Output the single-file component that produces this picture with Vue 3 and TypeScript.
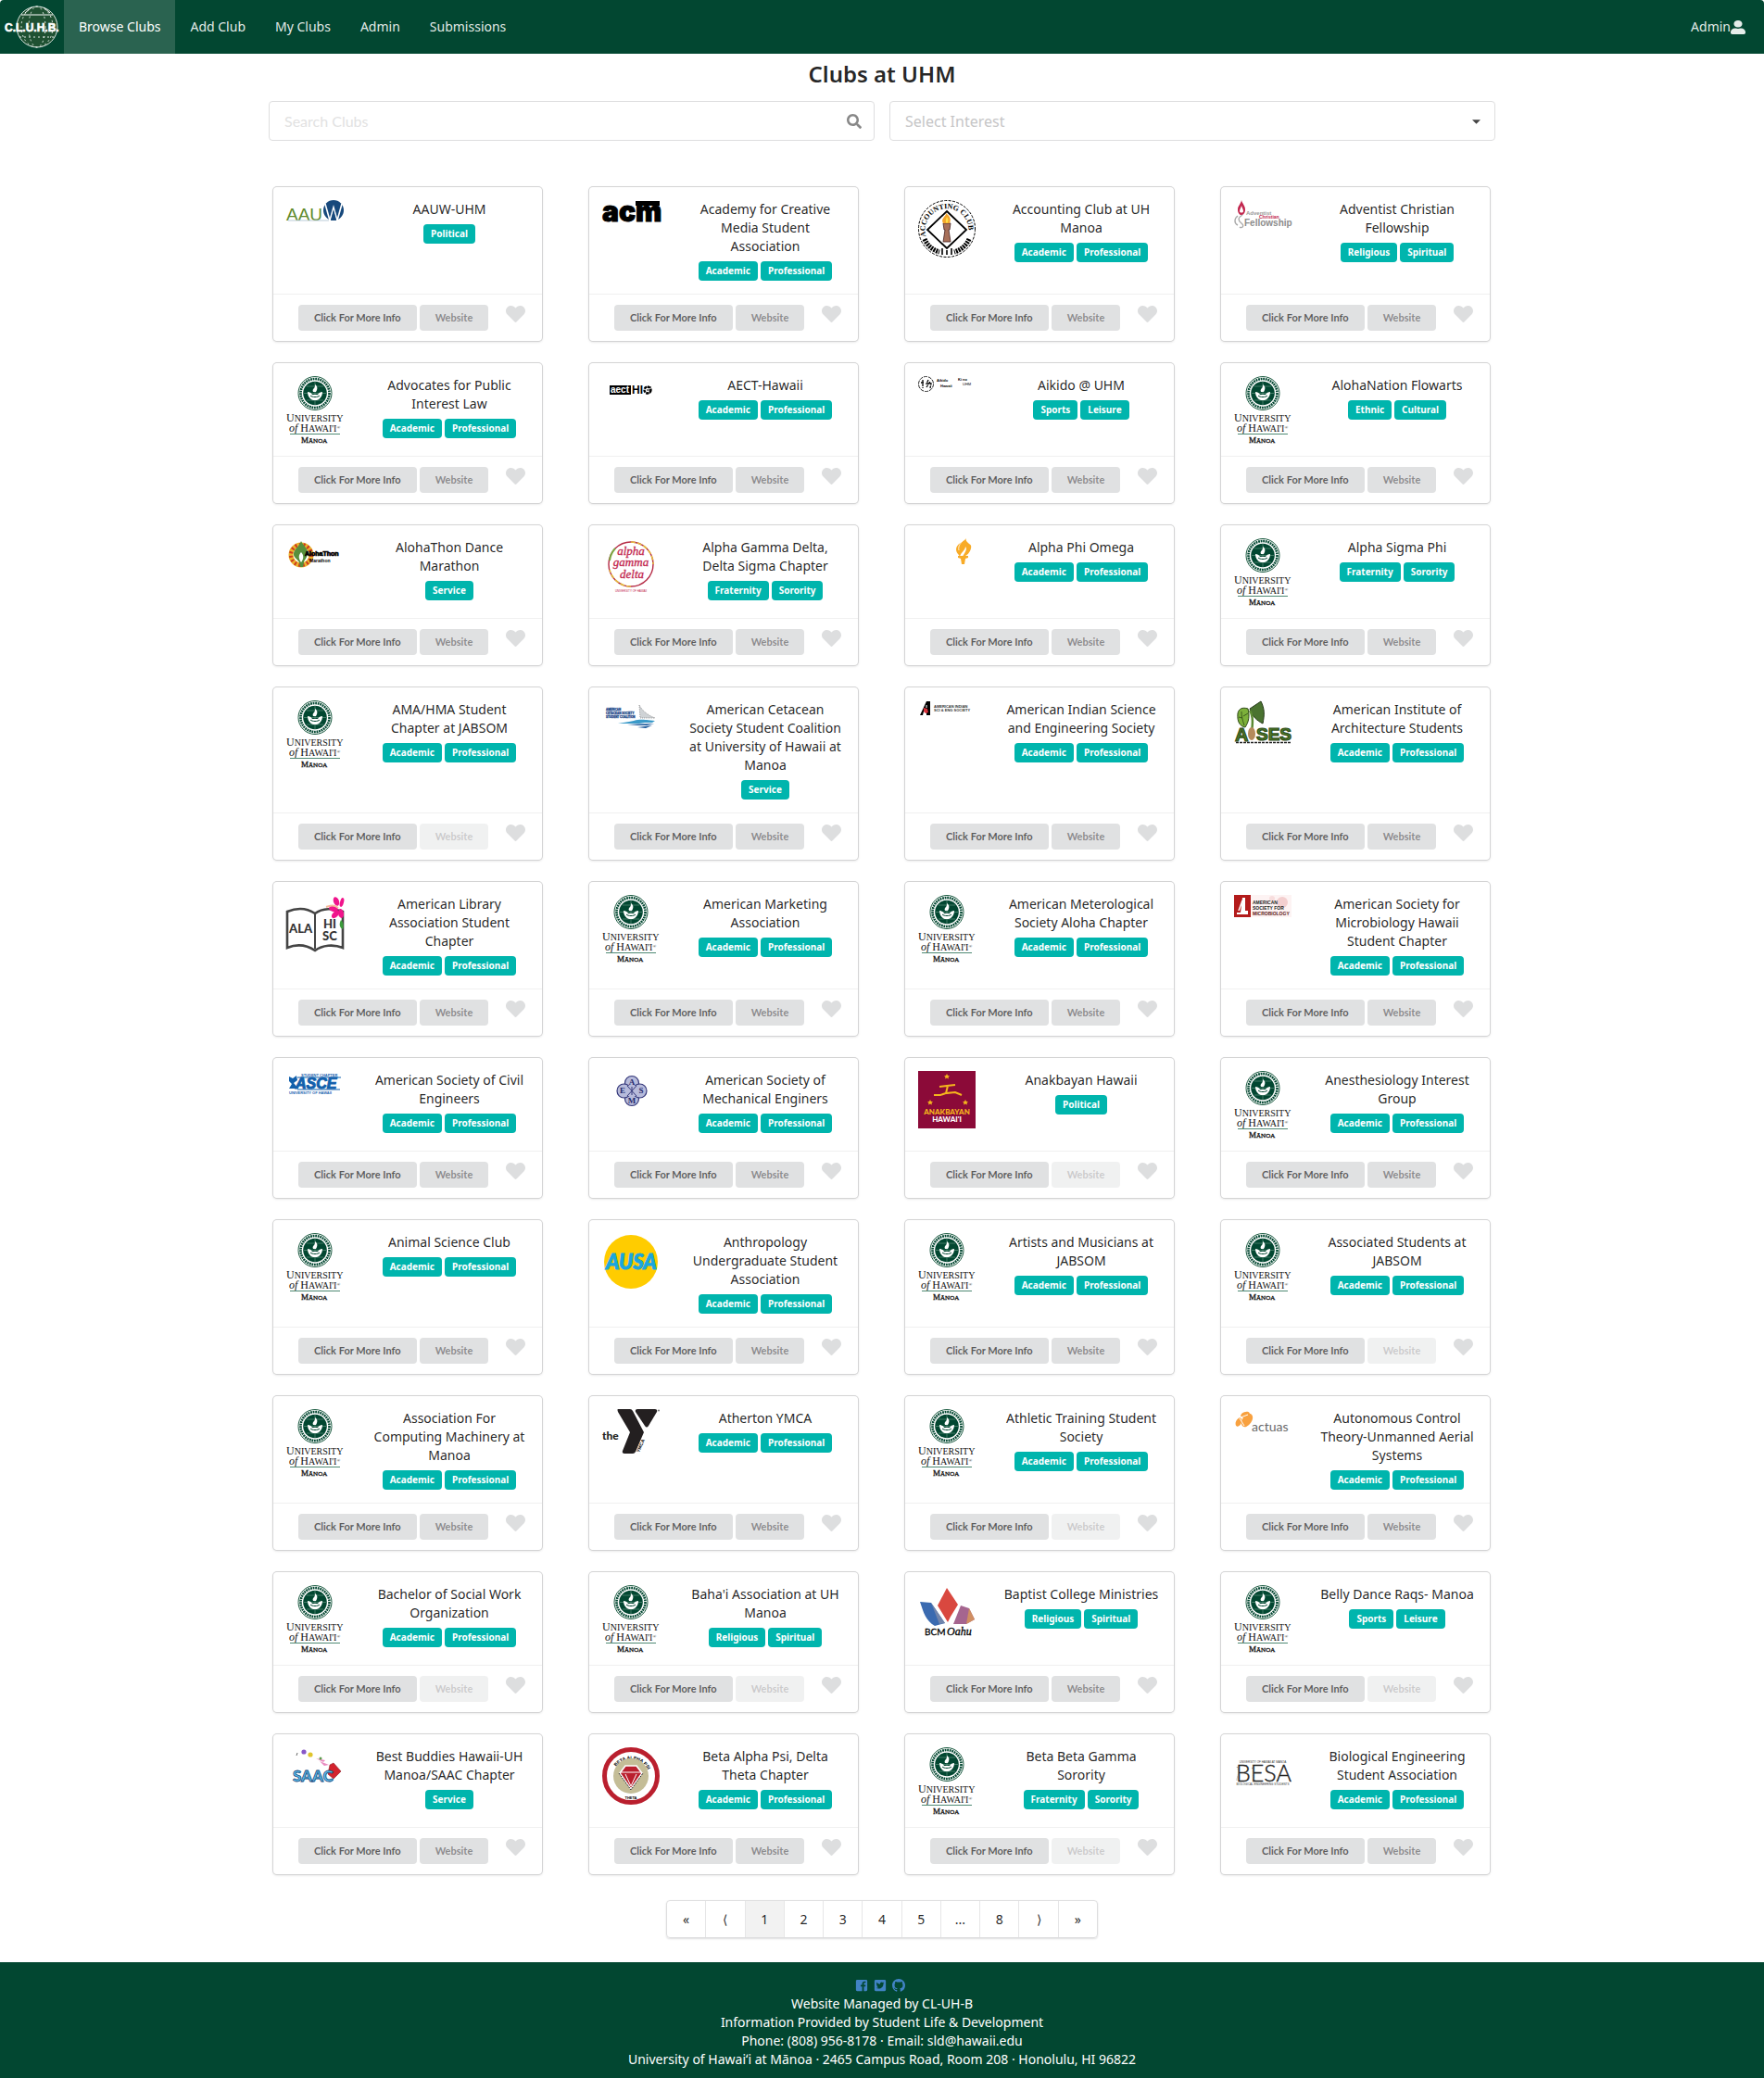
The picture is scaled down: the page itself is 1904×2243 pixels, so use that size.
<script setup lang="ts">
import { ref } from 'vue'

interface Club {
  name: string
  tags: string[]
  logo: string
  noSite?: boolean
}

const acad = ['Academic', 'Professional']

const club = (name: string, tags: string[], logo = 'uh', noSite = false): Club => ({ name, tags, logo, noSite })

const clubs: Club[] = [
  club('AAUW-UHM', ['Political'], 'aauw'),
  club('Academy for Creative Media Student Association', acad, 'acm'),
  club('Accounting Club at UH Manoa', acad, 'accounting'),
  club('Adventist Christian Fellowship', ['Religious', 'Spiritual'], 'adventist'),
  club('Advocates for Public Interest Law', acad),
  club('AECT-Hawaii', acad, 'aect'),
  club('Aikido @ UHM', ['Sports', 'Leisure'], 'aikido'),
  club('AlohaNation Flowarts', ['Ethnic', 'Cultural']),
  club('AlohaThon Dance Marathon', ['Service'], 'alohathon'),
  club('Alpha Gamma Delta, Delta Sigma Chapter', ['Fraternity', 'Sorority'], 'agd'),
  club('Alpha Phi Omega', acad, 'apo'),
  club('Alpha Sigma Phi', ['Fraternity', 'Sorority']),
  club('AMA/HMA Student Chapter at JABSOM', acad, 'uh', true),
  club('American Cetacean Society Student Coalition at University of Hawaii at Manoa', ['Service'], 'cetacean'),
  club('American Indian Science and Engineering Society', acad, 'aises'),
  club('American Institute of Architecture Students', acad, 'aias'),
  club('American Library Association Student Chapter', acad, 'ala'),
  club('American Marketing Association', acad),
  club('American Meterological Society Aloha Chapter', acad),
  club('American Society for Microbiology Hawaii Student Chapter', acad, 'asm'),
  club('American Society of Civil Engineers', acad, 'asce'),
  club('American Society of Mechanical Enginers', acad, 'asme'),
  club('Anakbayan Hawaii', ['Political'], 'anakbayan', true),
  club('Anesthesiology Interest Group', acad),
  club('Animal Science Club', acad),
  club('Anthropology Undergraduate Student Association', acad, 'ausa'),
  club('Artists and Musicians at JABSOM', acad),
  club('Associated Students at JABSOM', acad, 'uh', true),
  club('Association For Computing Machinery at Manoa', acad),
  club('Atherton YMCA', acad, 'ymca'),
  club('Athletic Training Student Society', acad, 'uh', true),
  club('Autonomous Control Theory-Unmanned Aerial Systems', acad, 'actuas'),
  club('Bachelor of Social Work Organization', acad, 'uh', true),
  club("Baha'i Association at UH Manoa", ['Religious', 'Spiritual'], 'uh', true),
  club('Baptist College Ministries', ['Religious', 'Spiritual'], 'bcm'),
  club('Belly Dance Raqs- Manoa', ['Sports', 'Leisure'], 'uh', true),
  club('Best Buddies Hawaii-UH Manoa/SAAC Chapter', ['Service'], 'saac'),
  club('Beta Alpha Psi, Delta Theta Chapter', acad, 'bap'),
  club('Beta Beta Gamma Sorority', ['Fraternity', 'Sorority'], 'uh', true),
  club('Biological Engineering Student Association', acad, 'besa'),
]

const links = ['Browse Clubs', 'Add Club', 'My Clubs', 'Admin', 'Submissions']
const pages = ['«', '⟨', '1', '2', '3', '4', '5', '...', '8', '⟩', '»']
const interests = ['Academic', 'Cultural', 'Ethnic', 'Fraternity', 'Leisure', 'Political', 'Professional', 'Religious', 'Service', 'Sorority', 'Spiritual', 'Sports']

const search = ref('')
const interest = ref('')
</script>

<template>
  <div class="page">
    <header class="topbar">
      <a href="#" class="brand" aria-label="Home">
        <svg width="69" height="58" viewBox="0 0 69 58">
          <circle cx="40" cy="29" r="22" fill="#1f5132" stroke="#dfe9e3" stroke-width="1" />
          <g fill="none" stroke="#dfe9e3" stroke-width="1" stroke-dasharray="2 3">
            <ellipse cx="40" cy="29" rx="9" ry="22" />
            <ellipse cx="40" cy="29" rx="17" ry="22" />
            <path d="M21 40h38" />
          </g>
          <path d="M23 16h34M27 14l7-6M54 14l-7-6" stroke="#fff" fill="none" />
          <text x="5" y="34" class="sans heavy" font-size="12" fill="#fff" stroke="#fff" stroke-width=".6">C.L.U.H.B.</text>
        </svg>
      </a>
      <nav class="links">
        <a v-for="(l, i) in links" :key="l" href="#" :class="{ active: i === 0 }">{{ l }}</a>
      </nav>
      <a href="#" class="account">Admin<svg width="16" height="15" viewBox="0 0 448 512" preserveAspectRatio="none"><path fill="currentColor" d="M224 256c70.7 0 128-57.3 128-128S294.7 0 224 0 96 57.3 96 128s57.3 128 128 128zm89.6 32h-16.7c-22.2 10.2-46.9 16-72.9 16s-50.6-5.8-72.9-16h-16.7C60.2 288 0 348.2 0 422.4V464c0 26.5 21.5 48 48 48h352c26.5 0 48-21.5 48-48v-41.6c0-74.2-60.2-134.4-134.4-134.4z" /></svg></a>
    </header>

    <main class="content">
      <h1>Clubs at UHM</h1>

      <form class="filters" @submit.prevent>
        <div class="field">
          <input v-model="search" type="text" placeholder="Search Clubs" aria-label="Search Clubs" />
          <svg class="find" width="16" height="16" viewBox="0 0 512 512"><path fill="currentColor" d="M505 442.7L405.3 343c-4.5-4.5-10.6-7-17-7H372c27.6-35.3 44-79.7 44-128C416 93.1 322.9 0 208 0S0 93.1 0 208s93.1 208 208 208c48.3 0 92.7-16.4 128-44v16.3c0 6.4 2.5 12.5 7 17l99.7 99.7c9.4 9.4 24.6 9.4 33.9 0l28.3-28.3c9.4-9.4 9.4-24.6.1-34zM208 336c-70.7 0-128-57.2-128-128 0-70.7 57.2-128 128-128 70.7 0 128 57.2 128 128 0 70.7-57.2 128-128 128z" /></svg>
        </div>
        <div class="field">
          <select v-model="interest" aria-label="Select Interest">
            <option value="" disabled>Select Interest</option>
            <option v-for="i in interests" :key="i">{{ i }}</option>
          </select>
          <svg class="caret" width="9" height="5" viewBox="0 0 10 5"><path d="M0 0h10L5 5z" fill="#444" /></svg>
        </div>
      </form>

      <section class="cards">
        <article v-for="c in clubs" :key="c.name" class="card">
          <div class="info">
            <svg class="logo" width="62" height="72" viewBox="0 0 62 72" aria-hidden="true">
              <g v-if="c.logo === 'uh'">
                <circle cx="31" cy="18.5" r="18" fill="#fff" stroke="#1a5a40" stroke-width="1" />
                <circle cx="31" cy="18.5" r="15.5" fill="none" stroke="#024731" stroke-width="2.6" stroke-dasharray="1.8 .8" />
                <circle cx="31" cy="18.5" r="12.8" fill="#024731" />
                <path d="M19 18.5h24M31 6v25M22 11h18M22 26h18" stroke="#6f9f8b" stroke-width=".6" />
                <path d="M23 17c2 0 4 1 5 3h6c1-2 3-3 5-3 0 5-3 8-6 9h-4c-3-1-6-4-6-9z" fill="#fff" />
                <path d="M31 9c3 2 3 5 1 8h-3c-1-2 0-3 1-4s1-2 1-4z" fill="#fff" />
                <path d="M26 21c2 2 8 2 10 0" stroke="#024731" fill="none" />
                <text x="0" y="49" class="serif" font-size="10" fill="#111"><tspan font-size="12">U</tspan>NIVERSITY</text>
                <text x="3" y="60" class="serif" font-size="10" fill="#111"><tspan font-size="12" font-style="italic">of</tspan><tspan font-size="12" dx="3">H</tspan>AWAI'I<tspan font-size="5" dy="-3">®</tspan></text>
                <path d="M4 62.5h54" stroke="#4f8a74" />
                <text x="16" y="72" class="serif" font-size="7" fill="#111" stroke="#111" stroke-width=".3"><tspan font-size="9">M</tspan>ĀNOA</text>
              </g>

              <g v-else-if="c.logo === 'aauw'">
                <text x="0" y="22" class="sans" font-size="19" fill="#5f8a2c">AAU</text>
                <circle cx="51" cy="11" r="11" fill="#17497c" />
                <path d="M42 4l5 18 4-14 4 14 5-18" fill="none" stroke="#fff" stroke-width="1.6" />
                <path d="M48 22l3-12 3 12z" fill="#17497c" />
                <path d="M2 22h44" stroke="#b9cbd8" />
              </g>

              <g v-else-if="c.logo === 'acm'">
                <text x="0" y="23" class="inter black" font-size="30" stroke="#000" stroke-width="1">acm</text>
                <path d="M36 1h26v5H36z" />
              </g>

              <g v-else-if="c.logo === 'accounting'">
                <circle cx="31" cy="31" r="30.5" fill="none" stroke="#000" stroke-width="1" stroke-dasharray="3 1.4" />
                <path id="acct-ring" d="M9 41a23.5 23.5 0 1 1 44 0" fill="none" />
                <text class="serif bold" font-size="8"><textPath href="#acct-ring" startOffset="2">ACCOUNTING CLUB</textPath></text>
                <path d="M7 42c3 7 9 12 16 14M55 42c-3 7-9 12-16 14" fill="none" stroke="#000" stroke-width="5" stroke-dasharray="2 1" />
                <path d="M26 52v7M36 52v7M31 54v5" stroke="#000" stroke-width="1.6" />
                <path d="M31 12l21 20-21 20-21-20z" fill="#fff" stroke="#000" stroke-width="1.8" />
                <path d="M27 25h8l-1 7h-1l2 13h-8l2-13h-1z" fill="#a8705a" stroke="#422" stroke-width=".8" />
                <path d="M30 14c4 3 6 6 4 11h-7c-2-4 0-5 1-7 1-1 2-2 2-4z" fill="#f4a62a" />
                <path d="M31 18c2 3 2 5 0 7-2-2-1-4 0-7z" fill="#ffe04a" />
              </g>

              <g v-else-if="c.logo === 'adventist'">
                <path d="M8 0c1 4 4 6 4 10s-2 6-4 6-4-2-4-6 3-5 4-10z" fill="#c2264e" />
                <path d="M8 6c1 3 2 4 2 6s-4 2-4 0 1-3 2-6z" fill="#fff" />
                <path d="M4 17c-4 3-4 8 0 10M9 16c-5 3-5 6-1 9s0 6-2 4" fill="none" stroke="#aaa" stroke-width="1.4" />
                <text x="13" y="16" class="sans bold" font-size="6" fill="#999">Adventist</text>
                <text x="27" y="20" class="sans bold" font-size="5" fill="#c2264e">Christian</text>
                <text x="11" y="28" class="sans bold" font-size="10" fill="#8d8d8d">Fellowship</text>
              </g>

              <g v-else-if="c.logo === 'aect'">
                <path d="M8 10h23v10H8z" />
                <text x="9" y="18" class="sans bold" font-size="10" fill="#fff">aect</text>
                <text x="32" y="19" class="sans bold" font-size="12">HI</text>
                <circle cx="49" cy="15" r="3.5" fill="none" stroke="#000" stroke-width="2.4" stroke-dasharray="3 1" />
                <path d="M47 12h6M48 15h5M47 18h5" stroke="#000" />
              </g>

              <g v-else-if="c.logo === 'aikido'">
                <circle cx="8.5" cy="8.5" r="8" fill="none" stroke="#222" stroke-dasharray="4 1" />
                <path d="M5 4v9M3 7h4M11 4l-2 4h5l-1 5M9 12l4-6" fill="none" stroke="#000" stroke-width="1.3" stroke-dasharray="3 1" />
                <text x="20" y="6" class="sans bold" font-size="4">Aikido</text>
                <text x="24" y="12" class="sans bold" font-size="4">Hawaii</text>
                <text x="43" y="5" class="sans bold" font-size="4">Ki no</text>
                <text x="48" y="10" class="sans" font-size="4">UHM</text>
              </g>

              <g v-else-if="c.logo === 'alohathon'">
                <circle cx="16" cy="18" r="11" fill="none" stroke="#e9b32c" stroke-width="5" />
                <circle cx="16" cy="18" r="11" fill="none" stroke="#cf3a1f" stroke-width="4" stroke-dasharray="2 2.5" />
                <path d="M16 3c2 5 8 8 7 14-1 5-4 7-4 9l-1 5h-3l-1-5c-1-3-7-5-6-10 1-5 6-7 8-13z" fill="#578f3c" />
                <path d="M16 15c3 3 3 7 0 11-3-4-3-8 0-11z" fill="#fff" />
                <text x="20" y="19" class="sans bold" font-size="7" stroke="#000" stroke-width=".7">AlohaThon</text>
                <text x="25" y="26" class="sans bold" font-size="5">Marathon</text>
              </g>

              <g v-else-if="c.logo === 'agd'">
                <circle cx="31" cy="28" r="24" fill="none" stroke="#b52a45" stroke-width="1.4" />
                <path d="M31 4A24 24 0 0 1 55 28M31 52A24 24 0 0 1 8 34" fill="none" stroke="#e4b93f" stroke-width="1.6" stroke-dasharray="5 2" />
                <path d="M14 11A24 24 0 0 0 8 24" fill="none" stroke="#7ca843" stroke-width="2" />
                <g class="script" fill="#c2264e" stroke="#c2264e" stroke-width=".3" text-anchor="middle" font-size="13">
                  <text x="31" y="18">alpha</text>
                  <text x="31" y="30">gamma</text>
                  <text x="32" y="43">delta</text>
                </g>
                <text x="31" y="58" class="sans" font-size="3" fill="#c2264e" text-anchor="middle">UNIVERSITY OF HAWAII</text>
              </g>

              <g v-else-if="c.logo === 'apo'" fill="#f8ab27">
                <path d="M52 0c-3 4-11 6-11 12 0 4 3 5 4 8 1-5 6-7 6-11 3 3-2 8-3 11 5-1 8-5 9-9s-1-4-3-6-3-3-2-5z" />
                <path d="M48 3c-3 3-5 6-4 10" fill="none" stroke="#fff" stroke-width=".8" />
                <path d="M43 19h11v2l-3 1-1 6h-3l-1-6-3-1z" />
              </g>

              <g v-else-if="c.logo === 'cetacean'">
                <g class="sans bold" font-size="3" fill="#274c8b" stroke="#274c8b" stroke-width=".3">
                  <text x="4" y="11">AMERICAN</text>
                  <text x="4" y="15">CETACEAN SOCIETY</text>
                  <text x="4" y="19">STUDENT COALITION</text>
                </g>
                <path d="M40 5l1 14h16c-5-2-13-6-17-14z" fill="#cfd3d6" stroke="#666" stroke-width=".6" stroke-dasharray="1 1" />
                <path d="M34 22c8-2 10-1 23 0l-3 2h-8l-6 1H17l12-2z" fill="#3a9ac9" />
                <path d="M27 26l29-1-8 2H38zM38 29l16-2-7 3z" fill="#1f5b9c" />
              </g>

              <g v-else-if="c.logo === 'aises'">
                <path d="M2 16L9 1h4v15H9v-4H6l-1 4z" />
                <path d="M6 8l4 1 1 4-3 1-2-2z" fill="#d5313a" />
                <path d="M9 8V5" stroke="#fff" />
                <text x="17" y="8" class="sans bold" font-size="4" fill="#333">AMERICAN INDIAN</text>
                <text x="17" y="12" class="sans bold" font-size="4" fill="#333">SCI &amp; ENG SOCIETY</text>
              </g>

              <g v-else-if="c.logo === 'aias'">
                <path d="M4 14c1-5 5-7 11-5 2 8 1 14-3 20-5-1-9-5-8-15z" fill="#7cb03a" stroke="#2c4617" />
                <path d="M8 12c0 5 1 9 3 15M5 18l4 1M15 14l-5 3" stroke="#2c4617" stroke-width=".8" fill="none" />
                <path d="M17 9L29 1c4 8 4 14 2 24-6-3-12-8-14-16z" fill="#4a7330" stroke="#26391a" />
                <path d="M17 11c4 6 3 15 2 24" stroke="#5c8a34" stroke-width="2.5" fill="none" />
                <text x="1" y="44" class="sans black" font-size="20" fill="#4f7d2a" stroke="#2f4d19" stroke-width="1.2">A</text>
                <ellipse cx="19" cy="36" rx="4" ry="7" fill="#b58a5b" />
                <text x="24" y="43" class="sans black" font-size="19" fill="#4f7d2a" stroke="#2f4d19" stroke-width="1.2">SES</text>
                <path d="M2 45.5h59" stroke="#222" stroke-width="1.6" stroke-dasharray="3 1" />
              </g>

              <g v-else-if="c.logo === 'ala'">
                <path d="M1 18c10-4 21-4 30 2 8-6 20-6 30-2v39c-10-4-22-3-30 3-9-6-20-7-30-3z" fill="#fff" stroke="#444" stroke-width="2.6" />
                <path d="M31 20v38" stroke="#444" stroke-width="2" />
                <g class="lato black" font-size="13" fill="#333">
                  <text x="3" y="41">ALA</text>
                  <text x="40" y="36">HI</text>
                  <text x="39" y="49">SC</text>
                </g>
                <path d="M59 27c3 2 3 7 2 10-4-2-4-6-2-10z" fill="#3c9c3c" />
                <g fill="#f0158c">
                  <ellipse cx="54" cy="7" rx="3" ry="5" transform="rotate(-20 54 7)" />
                  <ellipse cx="60" cy="8" rx="2" ry="5" transform="rotate(15 60 8)" />
                  <ellipse cx="51" cy="15" rx="5" ry="3" transform="rotate(15 51 15)" />
                  <ellipse cx="53" cy="21" rx="5" ry="3" transform="rotate(-45 53 21)" />
                  <ellipse cx="59" cy="20" rx="3" ry="5" transform="rotate(-10 59 20)" />
                </g>
                <path d="M43 13c4-1 8-3 13 1" stroke="#f6b89a" stroke-width="2" fill="none" />
              </g>

              <g v-else-if="c.logo === 'asm'">
                <path d="M18 0h44v24H18z" fill="#fdf3f3" />
                <circle cx="52" cy="8" r="6" fill="#f3cfcf" /><circle cx="41" cy="4" r="3" fill="#f8dede" />
                <path d="M0 0h18v24H0z" fill="#b31b1b" />
                <path d="M9 3h3v14h3v4H3v-2h4z" fill="#fff" /><path d="M9 6l-4 11" stroke="#fff" stroke-width="1.5" />
                <g class="sans bold" font-size="5" fill="#222">
                  <text x="20" y="10">AMERICAN</text>
                  <text x="20" y="16">SOCIETY FOR</text>
                  <text x="20" y="22" fill="#5b1414">MICROBIOLOGY</text>
                </g>
              </g>

              <g v-else-if="c.logo === 'asce'">
                <text x="16" y="6" class="sans bold" font-size="4" fill="#1c66b0">STUDENT CHAPTER</text>
                <path d="M12 7h47M12 20h46" stroke="#1260ac" />
                <path d="M3 6l4 2 4-3 1 5-4 3 5 6H3l3-5-3-3z" fill="#1260ac" />
                <text x="10" y="19" class="sans black" font-size="16" font-style="italic" fill="#1260ac" stroke="#1260ac" stroke-width="1">ASCE</text>
                <text x="3" y="25" class="sans bold" font-size="4" fill="#1c66b0">UNIVERSITY OF HAWAII</text>
              </g>

              <g v-else-if="c.logo === 'asme'">
                <g fill="#b7bbdb" stroke="#35387a" stroke-width="1.2">
                  <circle cx="32" cy="13" r="7.5" /><circle cx="32" cy="30" r="7.5" />
                  <circle cx="23.5" cy="21.5" r="7.5" /><circle cx="40.5" cy="21.5" r="7.5" />
                </g>
                <path d="M27 16h10v11H27z" fill="#b7bbdb" />
                <path d="M27 16l10 11M37 16L27 27M32 17v9" stroke="#35387a" />
                <g class="serif bold" font-size="9" fill="#25286b" text-anchor="middle">
                  <text x="32" y="15">A</text><text x="22" y="24">E</text><text x="42" y="24">S</text><text x="32" y="35">M</text>
                </g>
              </g>

              <g v-else-if="c.logo === 'anakbayan'">
                <path d="M0 0h62v62H0z" fill="#8b0a38" />
                <path d="M31 3l1 2h2l-1.500 1.500.5 2-2-1-2 1 .5-2L28 5h2zM13 31l1 2h2l-1.500 1.500.5 2-2-1-2 1 .5-2L10 33h2zM51 31l1 2h2l-1.500 1.500.5 2-2-1-2 1 .5-2L48 33h2z" fill="#f5b61c" />
                <path d="M23 17l8-1 9-1M32 16l-2 8 10-1 7 3M30 24l-6 2h-7" fill="none" stroke="#f5b61c" stroke-width="2" />
                <text x="31" y="47" class="lato black" font-size="8" fill="#f5b61c" text-anchor="middle">ANAKBAYAN</text>
                <text x="31" y="55" class="lato black" font-size="8" fill="#fff" text-anchor="middle">HAWAI'I</text>
              </g>

              <g v-else-if="c.logo === 'ausa'">
                <circle cx="31" cy="31" r="29" fill="#fc0" />
                <text x="4" y="39" class="lato black" font-size="22" font-style="italic" fill="#1aa6df" stroke="#1aa6df">AUSA</text>
              </g>

              <g v-else-if="c.logo === 'ymca'">
                <text x="0" y="33" class="lato black" font-size="12" fill="#231f20">the</text>
                <path d="M17 0h13q2 0 3 2l12 23-9 21q-1 2-3 2H24q-3 0-2-3l8-20L17 3q-1-3 0-3z" fill="#231f20" />
                <path d="M38 0h19q3 0 2 3l-9 15q-2 3-4 0L36 3q-1-3 2-3z" fill="#231f20" />
                <text x="40" y="47" class="sans bold" font-size="5" transform="rotate(-66 40 47)">YMCA</text>
                <circle cx="61" cy="1.5" r="1" fill="#777" />
              </g>

              <g v-else-if="c.logo === 'actuas'">
                <g fill="#f8a13f">
                  <ellipse cx="12" cy="6" rx="5" ry="3" transform="rotate(-20 12 6)" />
                  <ellipse cx="5" cy="14" rx="3" ry="5" transform="rotate(25 5 14)" />
                  <ellipse cx="14" cy="12" rx="5" ry="8" transform="rotate(35 14 12)" />
                </g>
                <path d="M6 10l5 8M7 9l8-3" stroke="#fff" />
                <text x="19" y="24" class="lato" font-size="14" fill="#6a6a6a">actuas</text>
              </g>

              <g v-else-if="c.logo === 'bcm'">
                <path d="M31 3l12 18-8 13-3 6-11-18z" fill="#d9483f" />
                <path d="M2 18l12 1 15 22-11 3C8 38 6 30 2 18z" fill="#3a6ab0" />
                <path d="M14 19l15 22-6 1z" fill="#7285ab" />
                <path d="M46 22l9 3 6 12-9 5-14 0z" fill="#a5658f" />
                <path d="M55 25l6 12-9 5z" fill="#d08e62" />
                <text x="7" y="54" class="lato" font-size="10" stroke="#000" stroke-width=".3">BCM</text>
                <text x="31" y="54" class="script" font-size="12" stroke="#000" stroke-width=".3">Oahu</text>
              </g>

              <g v-else-if="c.logo === 'saac'">
                <circle cx="19" cy="5" r="2.6" fill="#8858c8" /><circle cx="26" cy="8" r="2.6" fill="#dfc52c" />
                <path d="M12 6l-1 3" stroke="#666" /><path d="M32 12l10 2-2 2zM36 15l10 4-5 1z" fill="#e98ac0" /><circle cx="37" cy="12" r="1.5" fill="#5c9c4c" />
                <path d="M47 19l4-2 8 9-8 8-6-5z" fill="#d3232e" stroke="#8c1720" stroke-width=".6" />
                <text x="7" y="37" class="lato black" font-size="17" fill="#5cc0ee" stroke="#17497c" stroke-width=".8">SAAC</text>
              </g>

              <g v-else-if="c.logo === 'bap'">
                <circle cx="31" cy="31" r="28.5" fill="#fff" stroke="#ba1f2e" stroke-width="5" />
                <path id="bap-ring" d="M11 29a20.5 20.5 0 0 1 40 0" fill="none" />
                <text class="sans bold" font-size="5"><textPath href="#bap-ring" startOffset="9">BETA ALPHA PSI</textPath></text>
                <text x="31" y="56" class="sans bold" font-size="4" text-anchor="middle">THETA</text>
                <circle cx="31" cy="31" r="19" fill="#c4bd97" />
                <path d="M19 28l6-8h12l6 8-12 17z" fill="#ba1f2e" stroke="#fff" stroke-width="1.6" />
                <path d="M20 27h22M25 29l6 13 6-13" stroke="#fff" fill="none" />
                <path d="M18 28l13 18 13-18" stroke="#222" stroke-dasharray="2 1" fill="none" />
              </g>

              <g v-else-if="c.logo === 'besa'">
                <text x="31" y="17" class="sans" font-size="3" text-anchor="middle" fill="#333">UNIVERSITY OF HAWAII AT MANOA</text>
                <text x="2" y="37" class="lato light" font-size="25" fill="#222" stroke="#222" stroke-width=".4">BESA</text>
                <path d="M3 21c4 6 0 10 0 15M19 22c5 4-2 9 4 14" fill="none" stroke="#777" stroke-dasharray="1 1" />
                <text x="31" y="41" class="sans" font-size="3" text-anchor="middle" fill="#333">BIOLOGICAL ENGINEERING STUDENTS</text>
              </g>
            </svg>
            <div class="text">
              <h2>{{ c.name }}</h2>
              <div class="tags"><span v-for="t in c.tags" :key="t" class="tag">{{ t }}</span></div>
            </div>
          </div>
          <div class="actions">
            <button type="button" class="btn">Click For More Info</button>
            <a href="#" class="btn site" :class="{ disabled: c.noSite }" :aria-disabled="c.noSite">Website</a>
            <button type="button" class="fav" aria-label="Favorite">
              <svg width="21" height="18" viewBox="0 32 512 448" preserveAspectRatio="none"><path fill="#dddedf" d="M462.3 62.6C407.5 15.9 326 24.3 275.7 76.2L256 96.5l-19.7-20.3C186.1 24.3 104.5 15.9 49.7 62.6c-62.8 53.6-66.1 149.8-9.9 207.9l193.5 199.8c12.5 12.9 32.8 12.9 45.3 0l193.5-199.8c56.3-58.1 53-154.3-9.8-207.9z" /></svg>
            </button>
          </div>
        </article>
      </section>

      <nav class="pager" aria-label="Pagination">
        <a v-for="p in pages" :key="p" href="#" :class="{ current: p === '1' }">{{ p }}</a>
      </nav>
    </main>

    <footer class="footer">
      <div class="social">
        <a href="#" aria-label="Facebook"><svg width="14" height="14" viewBox="0 0 448 512"><path d="M448 80v352c0 26.5-21.5 48-48 48h-85.3V302.8h60.6l8.7-67.6h-69.3V192c0-19.6 5.4-32.9 33.5-32.9H384V98.7c-6.2-.8-27.4-2.7-52.2-2.7-51.6 0-87 31.5-87 89.4v49.9H184v67.6h60.9V480H48c-26.5 0-48-21.5-48-48V80c0-26.5 21.5-48 48-48h352c26.5 0 48 21.5 48 48z" /></svg></a>
        <a href="#" aria-label="Twitter"><svg width="14" height="14" viewBox="0 0 448 512"><path d="M400 32H48C21.5 32 0 53.5 0 80v352c0 26.5 21.5 48 48 48h352c26.5 0 48-21.5 48-48V80c0-26.5-21.5-48-48-48zm-48.9 158.8c.2 2.8.2 5.7.2 8.5 0 86.7-66 186.6-186.6 186.6-37.2 0-71.7-10.8-100.7-29.4 5.3.6 10.4.8 15.8.8 30.7 0 58.9-10.4 81.4-28-28.8-.6-53-19.5-61.3-45.5 10.1 1.5 19.2 1.5 29.6-1.2-30-6.1-52.5-32.5-52.5-64.4v-.8c8.7 4.9 18.9 7.9 29.6 8.3a65.447 65.447 0 0 1-29.2-54.6c0-12.2 3.2-23.4 8.9-33.1 32.3 39.8 80.8 65.8 135.2 68.6-9.3-44.5 24-80.6 64-80.6 18.9 0 35.9 7.9 47.9 20.7 14.8-2.8 29-8.3 41.6-15.8-4.9 15.2-15.2 28-28.8 36.1 13.2-1.4 26-5.1 37.8-10.2-8.9 13.1-20.1 24.7-32.9 34z" /></svg></a>
        <a href="#" aria-label="GitHub"><svg width="14" height="14" viewBox="0 0 16 16"><path d="M8 0C3.58 0 0 3.58 0 8c0 3.54 2.29 6.53 5.47 7.59.4.07.55-.17.55-.38 0-.19-.01-.82-.01-1.49-2.01.37-2.53-.49-2.69-.94-.09-.23-.48-.94-.82-1.13-.28-.15-.68-.52-.01-.53.63-.01 1.08.58 1.23.82.72 1.21 1.87.87 2.33.66.07-.52.28-.87.51-1.07-1.78-.2-3.64-.89-3.64-3.95 0-.87.31-1.59.82-2.15-.08-.2-.36-1.02.08-2.12 0 0 .67-.21 2.2.82.64-.18 1.32-.27 2-.27s1.36.09 2 .27c1.53-1.04 2.2-.82 2.2-.82.44 1.1.16 1.92.08 2.12.51.56.82 1.27.82 2.15 0 3.07-1.87 3.75-3.65 3.95.29.25.54.73.54 1.48 0 1.07-.01 1.93-.01 2.2 0 .21.15.46.55.38A8.01 8.01 0 0016 8c0-4.42-3.58-8-8-8z" /></svg></a>
      </div>
      <div>Website Managed by CL-UH-B</div>
      <div>Information Provided by Student Life &amp; Development</div>
      <div>Phone: (808) 956-8178 · Email: sld@hawaii.edu</div>
      <div>University of Hawaiʻi at Mānoa · 2465 Campus Road, Room 208 · Honolulu, HI 96822</div>
    </footer>
  </div>
</template>

<style>
body {
  margin: 0;
  background: #fff;
}
</style>

<style scoped>
.page {
  font: 14px/20px "Noto Sans", sans-serif;
  color: rgba(0, 0, 0, 0.87);
}
a {
  color: inherit;
  text-decoration: none;
}
.topbar {
  display: flex;
  height: 58px;
  background: #024731;
  border-radius: 4px 4px 0 0;
  color: rgba(255, 255, 255, 0.9);
}
.brand {
  width: 69px;
}
.links {
  display: flex;
}
.links a {
  display: flex;
  align-items: center;
  padding: 0 16px;
}
.links .active {
  background: #2a6350;
  color: #fff;
}
.account {
  display: flex;
  align-items: center;
  margin-left: auto;
  margin-right: 20px;
}
.content {
  max-width: 1324px;
  margin: 0 auto;
}
h1 {
  margin: 0;
  padding: 7px 0 14px;
  font-size: 24px;
  line-height: 30px;
  font-weight: 600;
  text-align: center;
}
.filters {
  display: flex;
  gap: 16px;
  margin-bottom: 50px;
}
.field {
  position: relative;
  flex: 1;
}
.field input,
.field select {
  display: block;
  box-sizing: border-box;
  width: 100%;
  height: 43px;
  padding: 0 16px;
  border: 1px solid #dededf;
  border-radius: 4px;
  background: #fff;
  font: 16px/20px Lato, sans-serif;
  outline: 0;
}
.field input::placeholder {
  color: #e2e2e2;
  opacity: 1;
}
.field select {
  appearance: none;
  font-family: "Noto Sans", sans-serif;
  color: #c6c6c7;
}
.find {
  position: absolute;
  right: 14px;
  top: 14px;
  color: #888;
}
.caret {
  position: absolute;
  right: 16px;
  top: 20px;
  pointer-events: none;
}
.cards {
  display: grid;
  grid-template-columns: repeat(auto-fit, 290px);
  justify-content: space-between;
  gap: 24px;
  padding: 0 6px 0 5px;
}
.card {
  display: flex;
  flex-direction: column;
  border-radius: 4px;
  background: #fff;
  box-shadow: 0 1px 3px 0 #d4d4d5, 0 0 0 1px #d4d4d5;
}
.info {
  display: flex;
  flex: 1;
  justify-content: space-between;
  padding: 14px;
}
.logo {
  flex: none;
  overflow: visible;
}
.text {
  width: 172px;
  text-align: center;
}
h2 {
  margin: 0 0 6px;
  font: inherit;
}
.tags {
  display: flex;
  justify-content: center;
  gap: 3px;
}
.tag {
  padding: 0 8px;
  border-radius: 4px;
  background: #00b5ad;
  color: #fff;
  font-size: 10px;
  line-height: 21px;
  font-weight: 700;
}
.actions {
  display: flex;
  gap: 3px;
  padding: 11px 18px 11px 27px;
  border-top: 1px solid #f0f0f0;
}
.btn {
  padding: 0 17px;
  border: 0;
  border-radius: 4px;
  background: #e0e1e2;
  color: rgba(0, 0, 0, 0.6);
  font: 700 11px/28px Lato, sans-serif;
  cursor: pointer;
}
.site {
  color: rgba(0, 0, 0, 0.4);
}
.disabled {
  opacity: 0.45;
  pointer-events: none;
}
.fav {
  margin: 1px 0 0 auto;
  padding: 0;
  border: 0;
  background: none;
  height: 18px;
}
.fav svg {
  display: block;
}
.pager {
  display: flex;
  box-sizing: border-box;
  width: 466px;
  max-width: 100%;
  margin: 28px auto 0;
  border: 1px solid #dededf;
  border-radius: 4px;
  box-shadow: 0 1px 2px 0 rgba(34, 36, 38, 0.15);
}
.pager a {
  flex: 1;
  line-height: 39px;
  text-align: center;
  border-right: 1px solid #e6e6e7;
}
.pager a:last-child {
  border-right: 0;
}
.pager .current {
  background: #f2f2f2;
}
.footer {
  margin-top: 26px;
  padding: 15px 16px 10px;
  background: #024731;
  color: #fff;
  text-align: center;
}
.social {
  display: flex;
  justify-content: center;
  align-items: center;
  gap: 6px;
  height: 20px;
  margin-right: 4px;
}
.social svg {
  display: block;
  fill: #4183c4;
}
.sans {
  font-family: "Liberation Sans", sans-serif;
}
.serif {
  font-family: "Liberation Serif", serif;
}
.inter {
  font-family: Inter, sans-serif;
}
.lato {
  font-family: Lato, sans-serif;
}
.script {
  font-family: "Liberation Serif", serif;
  font-style: italic;
}
.light {
  font-weight: 300;
}
.bold,
.heavy {
  font-weight: 700;
}
.black {
  font-weight: 900;
}
</style>
